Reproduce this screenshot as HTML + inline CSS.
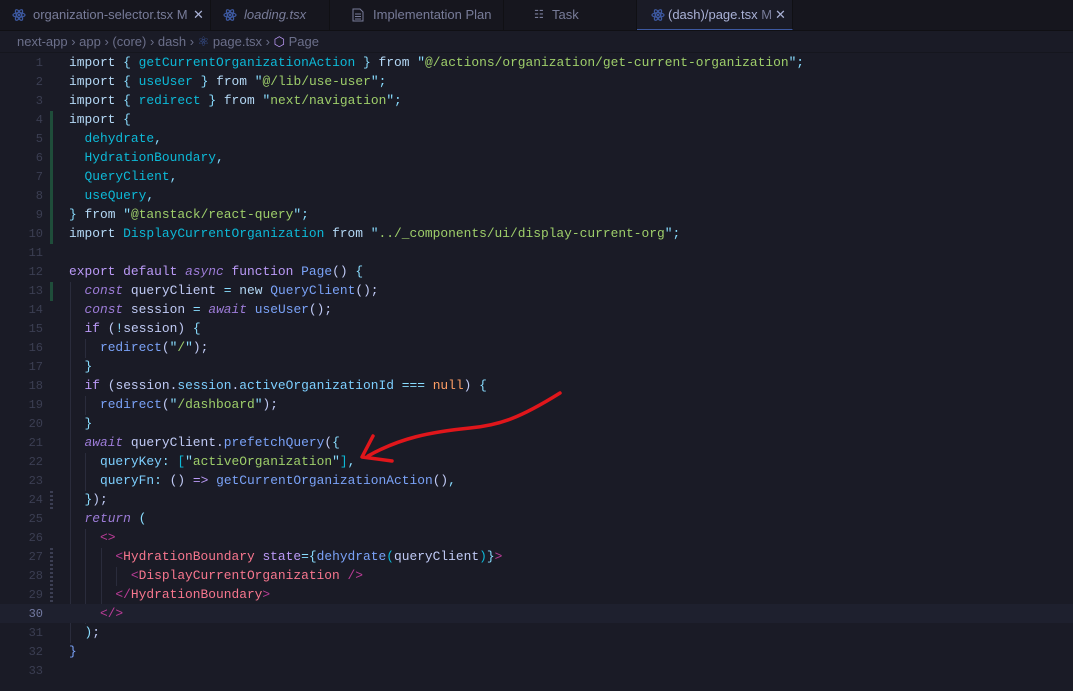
<!DOCTYPE html>
<html><head><meta charset="utf-8"><style>
*{margin:0;padding:0;box-sizing:border-box}
body{width:1073px;height:691px;background:#1a1b26;overflow:hidden;font-family:"Liberation Sans",sans-serif;position:relative}
.tabs{position:absolute;left:0;top:0;width:1073px;height:31px;background:#16161e;border-bottom:1px solid #101014}
.tab{position:absolute;top:0;height:30px;background:#16161e;border-right:1px solid #101014;color:#787c99;font-size:13px;line-height:30px;padding-left:33px;white-space:nowrap}
.tab.active{background:#1a1b26;border-bottom:1px solid #3d59a1;color:#a9b1d6}
.ic{position:absolute;left:12px;top:8px}
.crumb{position:absolute;top:31px;left:0;width:1073px;height:22px;color:#6b6f8a;font-size:13px;line-height:22px;padding-left:17px;border-bottom:1px solid #15161e}
.code{position:absolute;top:53px;left:0;width:1073px;font-family:"Liberation Mono",monospace;font-size:12.9px;color:#a9b1d6}
.ln{height:19px;line-height:19px;white-space:pre;position:relative}
.n{display:inline-block;width:43px;text-align:right;color:#3b3e52;margin-right:26px;font-size:12px}
.cur{background:#1e202e}
.cur .n{color:#737aa2}
.k{color:#b4d8f5}.b{color:#0db9d7}.p{color:#89ddff}.s{color:#9ece6a}.v{color:#7dcfff}
.kw{color:#9d7cd8;font-style:italic}.c{color:#bb9af7}.f{color:#7aa2f7}.t{color:#f7768e}.tg{color:#ba3c97}.o{color:#ff9e64}.w{color:#c0caf5}.pl{color:#bb9af7}
.g{position:absolute;left:50px;width:3px;background:#1f4d3a}
.gs{position:absolute;left:50px;width:3px;background:repeating-linear-gradient(#3b3e52 0 2px,transparent 2px 4px)}
.ig{position:absolute;width:1px;background:#2a2c3c}
</style></head><body>
<div class="tabs">
<div class="tab" style="left:0;width:211px"><svg class="ic" width="14" height="14" viewBox="0 0 14 14"><g fill="none" stroke="#3d59a1" stroke-width="1.2"><ellipse cx="7" cy="7" rx="6" ry="2.3"/><ellipse cx="7" cy="7" rx="6" ry="2.3" transform="rotate(60 7 7)"/><ellipse cx="7" cy="7" rx="6" ry="2.3" transform="rotate(120 7 7)"/></g><circle cx="7" cy="7" r="1.2" fill="#3d59a1"/></svg>organization-selector.tsx M<span style="position:absolute;left:193px;color:#a9b1d6">✕</span></div>
<div class="tab" style="left:211px;width:119px"><svg class="ic" width="14" height="14" viewBox="0 0 14 14"><g fill="none" stroke="#3d59a1" stroke-width="1.2"><ellipse cx="7" cy="7" rx="6" ry="2.3"/><ellipse cx="7" cy="7" rx="6" ry="2.3" transform="rotate(60 7 7)"/><ellipse cx="7" cy="7" rx="6" ry="2.3" transform="rotate(120 7 7)"/></g><circle cx="7" cy="7" r="1.2" fill="#3d59a1"/></svg><i>loading.tsx</i></div>
<div class="tab" style="left:330px;width:174px;padding-left:43px"><svg class="ic" style="left:22px" width="12" height="14" viewBox="0 0 12 14"><path d="M1 1h7l3 3v9H1z M3 6h6 M3 8.5h6 M3 11h6" fill="none" stroke="#787c99"/></svg>Implementation Plan</div>
<div class="tab" style="left:504px;width:133px;padding-left:48px"><span style="position:absolute;left:30px;font-size:11px">☷</span>Task</div>
<div class="tab active" style="left:637px;width:156px;padding-left:31px"><svg class="ic" style="left:14px" width="14" height="14" viewBox="0 0 14 14"><g fill="none" stroke="#3d59a1" stroke-width="1.2"><ellipse cx="7" cy="7" rx="6" ry="2.3"/><ellipse cx="7" cy="7" rx="6" ry="2.3" transform="rotate(60 7 7)"/><ellipse cx="7" cy="7" rx="6" ry="2.3" transform="rotate(120 7 7)"/></g><circle cx="7" cy="7" r="1.2" fill="#3d59a1"/></svg>(dash)/page.tsx <span style="color:#787c99">M</span><span style="position:absolute;left:138px;color:#a9b1d6">✕</span></div>
</div>
<div class="crumb">next-app › app › (core) › dash › <span style="color:#3d59a1">⚛</span> page.tsx › <span style="color:#bb9af7">⬡</span> Page</div>
<div class="g" style="top:111px;height:133px"></div>
<div class="g" style="top:282px;height:19px"></div>
<div class="gs" style="top:491px;height:19px"></div>
<div class="gs" style="top:548px;height:57px"></div>
<div class="ig" style="left:70px;top:282px;height:361px"></div>
<div class="ig" style="left:85px;top:339px;height:19px"></div>
<div class="ig" style="left:85px;top:396px;height:19px"></div>
<div class="ig" style="left:85px;top:453px;height:38px"></div>
<div class="ig" style="left:85px;top:529px;height:95px"></div>
<div class="ig" style="left:101px;top:548px;height:57px"></div>
<div class="ig" style="left:116px;top:567px;height:19px"></div>
<div class="code">
<div class="ln"><span class="n">1</span><span class="k">import</span> <span class="p">{</span> <span class="b">getCurrentOrganizationAction</span> <span class="p">}</span> <span class="k">from</span> <span class="p">"</span><span class="s">@/actions/organization/get-current-organization</span><span class="p">";</span></div>
<div class="ln"><span class="n">2</span><span class="k">import</span> <span class="p">{</span> <span class="b">useUser</span> <span class="p">}</span> <span class="k">from</span> <span class="p">"</span><span class="s">@/lib/use-user</span><span class="p">";</span></div>
<div class="ln"><span class="n">3</span><span class="k">import</span> <span class="p">{</span> <span class="b">redirect</span> <span class="p">}</span> <span class="k">from</span> <span class="p">"</span><span class="s">next/navigation</span><span class="p">";</span></div>
<div class="ln"><span class="n">4</span><span class="k">import</span> <span class="p">{</span></div>
<div class="ln"><span class="n">5</span>  <span class="b">dehydrate</span><span class="p">,</span></div>
<div class="ln"><span class="n">6</span>  <span class="b">HydrationBoundary</span><span class="p">,</span></div>
<div class="ln"><span class="n">7</span>  <span class="b">QueryClient</span><span class="p">,</span></div>
<div class="ln"><span class="n">8</span>  <span class="b">useQuery</span><span class="p">,</span></div>
<div class="ln"><span class="n">9</span><span class="p">}</span> <span class="k">from</span> <span class="p">"</span><span class="s">@tanstack/react-query</span><span class="p">";</span></div>
<div class="ln"><span class="n">10</span><span class="k">import</span> <span class="b">DisplayCurrentOrganization</span> <span class="k">from</span> <span class="p">"</span><span class="s">../_components/ui/display-current-org</span><span class="p">";</span></div>
<div class="ln"><span class="n">11</span></div>
<div class="ln"><span class="n">12</span><span class="pl">export default</span> <span class="kw">async</span> <span class="pl">function</span> <span class="f">Page</span><span class="w">()</span> <span class="p">{</span></div>
<div class="ln"><span class="n">13</span>  <span class="kw">const</span> <span class="w">queryClient</span> <span class="p">=</span> <span class="k">new</span> <span class="f">QueryClient</span><span class="w">();</span></div>
<div class="ln"><span class="n">14</span>  <span class="kw">const</span> <span class="w">session</span> <span class="p">=</span> <span class="kw">await</span> <span class="f">useUser</span><span class="w">();</span></div>
<div class="ln"><span class="n">15</span>  <span class="pl">if</span> <span class="w">(</span><span class="p">!</span><span class="w">session)</span> <span class="p">{</span></div>
<div class="ln"><span class="n">16</span>    <span class="f">redirect</span><span class="w">(</span><span class="p">"</span><span class="s">/</span><span class="p">"</span><span class="w">);</span></div>
<div class="ln"><span class="n">17</span>  <span class="p">}</span></div>
<div class="ln"><span class="n">18</span>  <span class="pl">if</span> <span class="w">(session.</span><span class="v">session</span><span class="w">.</span><span class="v">activeOrganizationId</span> <span class="p">===</span> <span class="o">null</span><span class="w">)</span> <span class="p">{</span></div>
<div class="ln"><span class="n">19</span>    <span class="f">redirect</span><span class="w">(</span><span class="p">"</span><span class="s">/dashboard</span><span class="p">"</span><span class="w">);</span></div>
<div class="ln"><span class="n">20</span>  <span class="p">}</span></div>
<div class="ln"><span class="n">21</span>  <span class="kw">await</span> <span class="w">queryClient.</span><span class="f">prefetchQuery</span><span class="w">(</span><span class="p">{</span></div>
<div class="ln"><span class="n">22</span>    <span class="v">queryKey</span><span class="p">:</span> <span class="b">[</span><span class="p">"</span><span class="s">activeOrganization</span><span class="p">"</span><span class="b">]</span><span class="p">,</span></div>
<div class="ln"><span class="n">23</span>    <span class="v">queryFn</span><span class="p">:</span> <span class="w">()</span> <span class="c">=&gt;</span> <span class="f">getCurrentOrganizationAction</span><span class="w">()</span><span class="p">,</span></div>
<div class="ln"><span class="n">24</span>  <span class="p">}</span><span class="w">);</span></div>
<div class="ln"><span class="n">25</span>  <span class="kw">return</span> <span class="p">(</span></div>
<div class="ln"><span class="n">26</span>    <span class="tg">&lt;&gt;</span></div>
<div class="ln"><span class="n">27</span>      <span class="tg">&lt;</span><span class="t">HydrationBoundary</span> <span class="c">state</span><span class="p">={</span><span class="f">dehydrate</span><span class="b">(</span><span class="w">queryClient</span><span class="b">)</span><span class="p">}</span><span class="tg">&gt;</span></div>
<div class="ln"><span class="n">28</span>        <span class="tg">&lt;</span><span class="t">DisplayCurrentOrganization</span> <span class="tg">/&gt;</span></div>
<div class="ln"><span class="n">29</span>      <span class="tg">&lt;/</span><span class="t">HydrationBoundary</span><span class="tg">&gt;</span></div>
<div class="ln cur"><span class="n">30</span>    <span class="tg">&lt;/&gt;</span></div>
<div class="ln"><span class="n">31</span>  <span class="p">)</span><span class="w">;</span></div>
<div class="ln"><span class="n">32</span><span class="f">}</span></div>
<div class="ln"><span class="n">33</span></div>
</div>
<svg style="position:absolute;left:0;top:0" width="1073" height="691"><path d="M560 393 C520 418 500 425 470 428 C430 432 400 438 368 456 M373 436 L362 457 L392 461" fill="none" stroke="#e0161b" stroke-width="3.5" stroke-linecap="round" stroke-linejoin="round"/></svg>
</body></html>
